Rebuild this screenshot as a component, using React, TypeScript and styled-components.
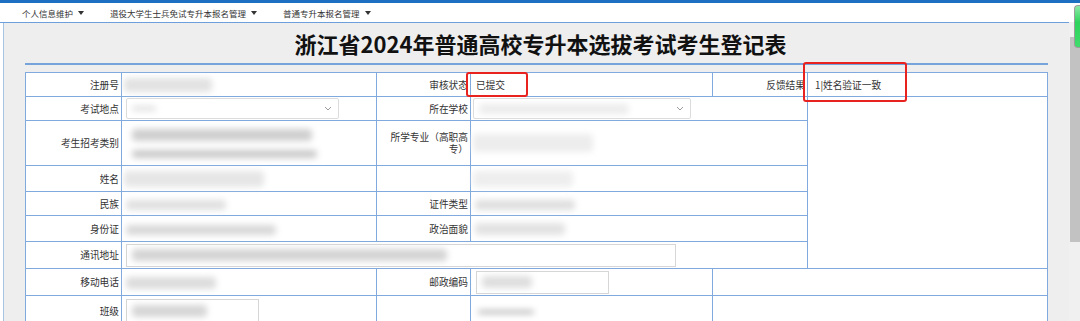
import React from "react";
import styled, { createGlobalStyle } from "styled-components";

const Global = createGlobalStyle`
  html, body {
    margin: 0;
    padding: 0;
    background: #ffffff;
  }
  body {
    font-family: "Noto Sans CJK SC", "Noto Sans", sans-serif;
    overflow: hidden;
  }
`;

const Screen = styled.div`
  position: relative;
  width: 1080px;
  height: 321px;
  overflow: hidden;
  display: flex;
  flex-direction: column;
`;

const TopBar = styled.div`
  flex: none;
  height: 3px;
  background: #1d6fc2;
`;

const Body = styled.div`
  flex: 1;
  display: flex;
  min-height: 0;
`;

const Main = styled.div`
  flex: 1;
  display: flex;
  flex-direction: column;
  min-width: 0;
`;

const Nav = styled.nav`
  flex: none;
  height: 19px;
  display: flex;
  align-items: center;
  gap: 26px;
  padding-left: 22px;
  background: #ffffff;
  border-bottom: 1px solid #6e9fdd;
`;

const NavItem = styled.span`
  display: flex;
  align-items: center;
  font-size: 8.5px;
  color: #333;
  white-space: nowrap;
`;

const Caret = styled.i`
  display: inline-block;
  margin-left: 5px;
  border-left: 3px solid transparent;
  border-right: 3px solid transparent;
  border-top: 4px solid #333;
`;

const Frame = styled.div`
  flex: 1;
  margin-left: 3px;
  border-left: 1px solid #a9c3e3;
  background: #eeeeee;
  padding: 0 21px;
  min-height: 0;
`;

const Title = styled.h1`
  margin: 0;
  height: 40px;
  line-height: 40px;
  padding-left: 8px;
  text-align: center;
  font-size: 22px;
  font-weight: bold;
  color: #111;
  border-bottom: 2px solid #76a3da;
`;

const Sheet = styled.table`
  margin-top: 7px;
  width: 1022px;
  border-collapse: collapse;
  table-layout: fixed;
  background: #ffffff;
  font-size: 9.7px;
  color: #333;
`;

const Row = styled.tr<{ $h: number }>`
  height: ${(p) => p.$h}px;
`;

const Label = styled.td`
  border: 1px solid #80aadd;
  padding: 0 2px;
  text-align: right;
  vertical-align: middle;
  line-height: 12px;
  white-space: normal;
`;

const Value = styled.td<{ $pad?: number }>`
  border: 1px solid #80aadd;
  padding: 0 0 0 ${(p) => p.$pad ?? 4}px;
  vertical-align: middle;
  line-height: 12px;
  white-space: nowrap;
`;

const Photo = styled.td`
  border: 1px solid #80aadd;
`;

const Stack = styled.div`
  display: flex;
  flex-direction: column;
  gap: 9px;
  padding-left: 6px;
`;

const Smudge = styled.span<{ $w: number; $h?: number; $tone?: string }>`
  display: inline-block;
  width: ${(p) => p.$w}px;
  height: ${(p) => p.$h ?? 12}px;
  background: ${(p) => p.$tone ?? "#d9d9d9"};
  border-radius: 4px;
  filter: blur(3px);
  vertical-align: middle;
`;

const SelectBox = styled.div<{ $w: number }>`
  box-sizing: border-box;
  width: ${(p) => p.$w}px;
  height: 21px;
  display: flex;
  align-items: center;
  justify-content: space-between;
  padding: 0 6px 0 5px;
  border: 1px solid #dcdcdc;
  border-radius: 2px;
  background: #ffffff;
`;

const TextBox = styled.div<{ $w: number }>`
  box-sizing: border-box;
  width: ${(p) => p.$w}px;
  height: 23px;
  display: flex;
  align-items: center;
  padding-left: 5px;
  border: 1px solid #d6d6d6;
  background: #ffffff;
`;

const ScrollTrack = styled.div`
  flex: none;
  width: 11px;
  background: linear-gradient(#ffffff 0 19px, #f0f0f0 19px);
  display: flex;
  flex-direction: column;
`;

const Thumb = styled.div`
  margin: 34px 0 0 1px;
  height: 205px;
  background: #c2c2c2;
`;

const Widget = styled.div`
  position: absolute;
  left: 1074px;
  top: 5px;
  width: 6px;
  height: 43px;
  box-sizing: border-box;
  border: 1px solid #9c9c9c;
  border-right: none;
  border-radius: 4px 0 0 4px;
  background: linear-gradient(#8eeaa8, #2fd35d 40%, #3fdc6b);
`;

const Highlight = styled.div<{ $x: number; $y: number; $w: number; $h: number }>`
  position: absolute;
  left: ${(p) => p.$x}px;
  top: ${(p) => p.$y}px;
  width: ${(p) => p.$w}px;
  height: ${(p) => p.$h}px;
  box-sizing: border-box;
  border: 2px solid #e8231f;
  border-radius: 3px;
`;

const Chevron = () => (
  <svg width="8" height="5" viewBox="0 0 8 5">
    <path d="M1 1l3 3 3-3" fill="none" stroke="#999" strokeWidth="1" />
  </svg>
);

const App = () => {
  return (
    <Screen>
      <Global />
      <TopBar />
      <Body>
        <Main>
          <Nav>
            <NavItem>
              个人信息维护
              <Caret />
            </NavItem>
            <NavItem>
              退役大学生士兵免试专升本报名管理
              <Caret />
            </NavItem>
            <NavItem>
              普通专升本报名管理
              <Caret />
            </NavItem>
          </Nav>
          <Frame>
            <Title>浙江省2024年普通高校专升本选拔考试考生登记表</Title>
            <Sheet>
              <colgroup>
                <col style={{ width: 96 }} />
                <col style={{ width: 255 }} />
                <col style={{ width: 94 }} />
                <col style={{ width: 242 }} />
                <col style={{ width: 95 }} />
                <col style={{ width: 240 }} />
              </colgroup>
              <tbody>
                <Row $h={24}>
                  <Label>注册号</Label>
                  <Value $pad={2}>
                    <Smudge $w={88} $h={14} $tone="#e2e2e2" />
                  </Value>
                  <Label>审核状态</Label>
                  <Value $pad={5}>已提交</Value>
                  <Label>反馈结果</Label>
                  <Value $pad={7}>1|姓名验证一致</Value>
                </Row>
                <Row $h={24}>
                  <Label>考试地点</Label>
                  <Value>
                    <SelectBox $w={213}>
                      <Smudge $w={24} $h={5} $tone="#e0e0e0" />
                      <Chevron />
                    </SelectBox>
                  </Value>
                  <Label>所在学校</Label>
                  <Value colSpan={2} $pad={2}>
                    <SelectBox $w={218}>
                      <Smudge $w={150} $h={10} $tone="#ececec" />
                      <Chevron />
                    </SelectBox>
                  </Value>
                  <Photo rowSpan={6} />
                </Row>
                <Row $h={45}>
                  <Label>考生招考类别</Label>
                  <Value>
                    <Stack>
                      <Smudge $w={180} $h={12} $tone="#cfcfcf" />
                      <Smudge $w={185} $h={8} $tone="#c9c9c9" />
                    </Stack>
                  </Value>
                  <Label>所学专业（高职高专）</Label>
                  <Value colSpan={2} $pad={2}>
                    <Smudge $w={120} $h={18} $tone="#ededed" />
                  </Value>
                </Row>
                <Row $h={26}>
                  <Label>姓名</Label>
                  <Value $pad={2}>
                    <Smudge $w={140} $h={16} $tone="#e6e6e6" />
                  </Value>
                  <Label />
                  <Value colSpan={2} $pad={2}>
                    <Smudge $w={100} $h={16} $tone="#eeeeee" />
                  </Value>
                </Row>
                <Row $h={24}>
                  <Label>民族</Label>
                  <Value>
                    <Smudge $w={100} $h={10} $tone="#e0e0e0" />
                  </Value>
                  <Label>证件类型</Label>
                  <Value colSpan={2}>
                    <Smudge $w={100} $h={10} $tone="#dedede" />
                  </Value>
                </Row>
                <Row $h={26}>
                  <Label>身份证</Label>
                  <Value>
                    <Smudge $w={150} $h={10} $tone="#d8d8d8" />
                  </Value>
                  <Label>政治面貌</Label>
                  <Value colSpan={2}>
                    <Smudge $w={90} $h={12} $tone="#e2e2e2" />
                  </Value>
                </Row>
                <Row $h={27}>
                  <Label>通讯地址</Label>
                  <Value colSpan={4}>
                    <TextBox $w={550}>
                      <Smudge $w={315} $h={12} $tone="#d4d4d4" />
                    </TextBox>
                  </Value>
                </Row>
                <Row $h={27}>
                  <Label>移动电话</Label>
                  <Value>
                    <Smudge $w={90} $h={12} $tone="#dcdcdc" />
                  </Value>
                  <Label>邮政编码</Label>
                  <Value $pad={5}>
                    <TextBox $w={133}>
                      <Smudge $w={50} $h={12} $tone="#dedede" />
                    </TextBox>
                  </Value>
                  <Value colSpan={2} />
                </Row>
                <Row $h={30}>
                  <Label>班级</Label>
                  <Value>
                    <TextBox $w={133}>
                      <Smudge $w={75} $h={12} $tone="#d6d6d6" />
                    </TextBox>
                  </Value>
                  <Label />
                  <Value $pad={7}>
                    <Smudge $w={56} $h={4} $tone="#b8b8b8" />
                  </Value>
                  <Value colSpan={2} />
                </Row>
              </tbody>
            </Sheet>
          </Frame>
        </Main>
        <ScrollTrack>
          <Thumb />
        </ScrollTrack>
      </Body>
      <Widget />
      <Highlight $x={466} $y={72} $w={62} $h={25} />
      <Highlight $x={803} $y={62} $w={104} $h={40} />
    </Screen>
  );
};

export default App;
